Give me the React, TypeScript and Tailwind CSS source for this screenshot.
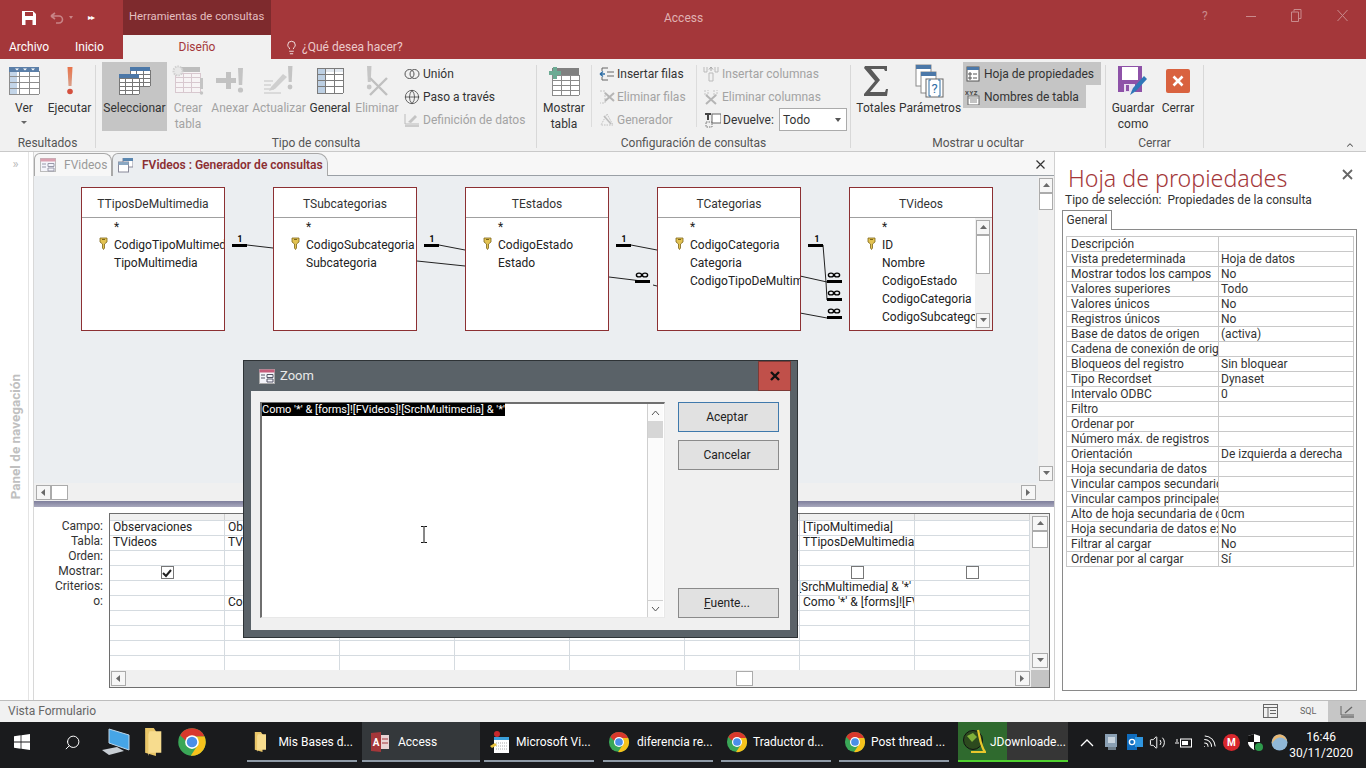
import { ReactNode } from "react"
import { Globe, Search, Volume2, Wifi, ChevronUp, Lightbulb } from "lucide-react"

const RED = "#a4373a"

function GridLines(p: { x: number; y: number; w: number; h: number; cols: number; rows: number; stroke?: string }) {
  const { x, y, w, h, cols, rows, stroke = "#8d8d8d" } = p
  const out = []
  for (let i = 0; i <= cols; i++) out.push(<line key={"c" + i} x1={x + (w * i) / cols} y1={y} x2={x + (w * i) / cols} y2={y + h} stroke={stroke} />)
  for (let i = 0; i <= rows; i++) out.push(<line key={"r" + i} x1={x} y1={y + (h * i) / rows} x2={x + w} y2={y + (h * i) / rows} stroke={stroke} />)
  return <g shapeRendering="crispEdges">{out}</g>
}

function VerIcon() {
  return (
    <svg width="32" height="30" viewBox="0 0 32 30">
      <rect x="1" y="1" width="30" height="27" fill="#fff" />
      <rect x="1" y="5" width="8" height="23" fill="#c3d5e8" />
      <GridLines x={1} y={5} w={30} h={23} cols={3} rows={4} />
      <rect x="1" y="1" width="30" height="5" fill="#5b7fa8" />
      <path d="M7 2.5h4l-2 2zM15 2.5h4l-2 2zM23 2.5h4l-2 2z" fill="#fff" />
    </svg>
  )
}
function RunIcon() {
  return (
    <svg width="12" height="30" viewBox="0 0 12 30">
      <defs>
        <linearGradient id="ex" x1="0" y1="0" x2="0" y2="1">
          <stop offset="0" stopColor="#e8734a" />
          <stop offset="1" stopColor="#d9a08a" />
        </linearGradient>
      </defs>
      <path d="M3.5 1h5l-1 19h-3z" fill="url(#ex)" />
      <circle cx="6" cy="25.5" r="2.8" fill="#d4503e" />
    </svg>
  )
}
function SelectIcon() {
  return (
    <svg width="34" height="30" viewBox="0 0 34 30">
      <rect x="12" y="1" width="20" height="19" fill="#fff" />
      <GridLines x={12} y={4} w={20} h={16} cols={3} rows={4} stroke="#777" />
      <rect x="12" y="1" width="20" height="4" fill="#4c78a8" />
      <rect x="1" y="8" width="20" height="20" fill="#fff" />
      <GridLines x={1} y={12} w={20} h={16} cols={3} rows={4} stroke="#777" />
      <rect x="1" y="8" width="20" height="4" fill="#4c78a8" />
    </svg>
  )
}
function MakeTableIcon() {
  return (
    <svg width="32" height="32" viewBox="0 0 32 32">
      <rect x="3" y="2" width="25" height="25" fill="#f7f4f5" />
      <GridLines x={3} y={8} w={25} h={19} cols={3} rows={4} stroke="#d8c8cf" />
      <rect x="3" y="2" width="25" height="5" fill="#bdbdbd" />
      <circle cx="6" cy="6" r="4.5" fill="#e8e8e8" stroke="#d0d0d0" strokeDasharray="1.5 1" strokeWidth="2" />
      <rect x="28" y="13" width="3" height="11" fill="#c4c4c4" />
      <circle cx="29.5" cy="28" r="1.7" fill="#c4c4c4" />
    </svg>
  )
}
function AppendIcon() {
  return (
    <svg width="30" height="30" viewBox="0 0 30 30">
      <path d="M7 9h4V3h5v6h5v5h-5v6h-5v-6H1V9z" fill="#c2c2c2" transform="translate(0,3)" />
      <path d="M23 2h5l-.8 17h-3.400z" fill="#c4c4c4" />
      <circle cx="25.5" cy="24" r="2.6" fill="#c4c4c4" />
    </svg>
  )
}
function UpdateIcon() {
  return (
    <svg width="32" height="32" viewBox="0 0 32 32">
      <path d="M1 16h9M1 20h7M1 24h10M1 28h17" stroke="#d2d2d2" strokeWidth="1.5" />
      <path d="M8 22l12-13 4 3-12 12-6 2z" fill="#cfcfcf" />
      <path d="M25 1h4.500l-.8 16h-3z" fill="#c4c4c4" />
      <circle cx="27" cy="22" r="2.4" fill="#c4c4c4" />
    </svg>
  )
}
function GeneralIcon() {
  return (
    <svg width="28" height="28" viewBox="0 0 28 28">
      <rect x="1" y="1" width="26" height="25" fill="#fff" />
      <rect x="1" y="1" width="9" height="25" fill="#bdd0e4" />
      <rect x="10" y="1" width="17" height="4" fill="#e2e8ef" />
      <GridLines x={1} y={1} w={26} h={25} cols={3} rows={4} stroke="#7b7b7b" />
    </svg>
  )
}
function DeleteIcon() {
  return (
    <svg width="24" height="32" viewBox="0 0 24 32">
      <path d="M2 1h4.500l-.8 16H2.800z" fill="#c6c6c6" />
      <circle cx="4.2" cy="22" r="2.4" fill="#c6c6c6" />
      <path d="M5 13l17 17M22 13L5 30" stroke="#c0c0c0" strokeWidth="2.4" />
    </svg>
  )
}
function ShowTableIcon() {
  return (
    <svg width="32" height="30" viewBox="0 0 32 30">
      <rect x="4" y="3" width="27" height="26" fill="#fff" />
      <GridLines x={4} y={9} w={27} h={20} cols={3} rows={4} stroke="#8a8a8a" />
      <rect x="4" y="2" width="27" height="7" fill="#808080" />
      <path d="M5 1h4v4h4v4H9v4H5V9H1V5h4z" fill="#6cab94" />
    </svg>
  )
}
function SigmaIcon() {
  return (
    <svg width="26" height="32" viewBox="0 0 26 32">
      <path d="M2 1h22v5h-2l-1-2H8l9 11-10 12h15l1-3h2l-1 7H1v-2l11-13L1 3z" fill="#5a5a5a" />
    </svg>
  )
}
function ParamsIcon() {
  return (
    <svg width="30" height="34" viewBox="0 0 30 34">
      <rect x="1" y="1" width="15" height="21" fill="#fff" stroke="#8a8a8a" />
      <rect x="1" y="1" width="15" height="4" fill="#4c78a8" />
      <rect x="6" y="8" width="15" height="21" fill="#fff" stroke="#8a8a8a" />
      <rect x="6" y="8" width="15" height="4" fill="#4c78a8" />
      <rect x="11" y="15" width="17" height="18" fill="#fff" stroke="#666" />
      <path d="M16 16h-2v16h2M23 16h2v16h-2" fill="none" stroke="#2f6ea5" />
      <text x="19.5" y="29" fontSize="13" textAnchor="middle" fill="#2f6ea5">?</text>
    </svg>
  )
}
function SaveAsIcon() {
  return (
    <svg width="32" height="32" viewBox="0 0 32 32">
      <path d="M1 1h24v26H1z" fill="#8e52a8" />
      <rect x="5" y="2" width="16" height="13" fill="#fff" />
      <rect x="7" y="19" width="11" height="8" fill="#e9def0" />
      <rect x="9" y="20" width="3" height="6" fill="#8e52a8" />
      <path d="M13 30l3-7 11-12 3 3-11 12z" fill="#2f77b8" />
    </svg>
  )
}
function CloseRedIcon() {
  return (
    <div className="w-[24px] h-[24px] rounded-[2px] bg-[#d9623f] flex items-center justify-center">
      <svg width="12" height="12" viewBox="0 0 12 12"><path d="M1.500 1.500l9 9M10.500 1.500l-9 9" stroke="#fff" strokeWidth="2.6" /></svg>
    </div>
  )
}
function SmallSvg(p: { children: ReactNode; w?: number }) {
  return <svg width={p.w ?? 16} height="16" viewBox="0 0 16 16" className="shrink-0">{p.children}</svg>
}

function ScrollBtn(p: { dir: "up" | "down" | "left" | "right"; className?: string }) {
  const d = { up: "M1 6l3.500-4 3.500 4z", down: "M1 2l3.500 4 3.500-4z", left: "M6 1L2 4.500 6 8z", right: "M2 1l4 3.500L2 8z" }[p.dir]
  return (
    <div className={"shrink-0 flex items-center justify-center bg-[#f6f6f6] border border-[#ababab] " + (p.className ?? "")}>
      <svg width="9" height="9" viewBox="0 0 9 9"><path d={d} fill="#6a6a6a" /></svg>
    </div>
  )
}

function Big(p: { w: string; icon: ReactNode; lines: string[]; off?: boolean; on?: boolean; caret?: boolean }) {
  return (
    <div className={"flex flex-col items-center h-[69px] shrink-0 " + p.w + (p.on ? " bg-[#c5c5c5]" : "")}>
      <div className="h-[38px] flex items-center justify-center shrink-0">{p.icon}</div>
      {p.lines.map((l) => (
        <div key={l} className={"leading-[16px] whitespace-nowrap " + (p.off ? "text-[#a3a3a3]" : "text-[#333]")}>{l}</div>
      ))}
      {p.caret && <div className="mt-[5px] w-0 h-0 border-x-[3px] border-x-transparent border-t-[3px] border-t-[#666]" />}
    </div>
  )
}
function Small(p: { icon: ReactNode; label: string; off?: boolean; gap?: string; on?: string }) {
  return (
    <div className={"h-[23px] flex items-center whitespace-nowrap " + (p.gap ?? "gap-[3px]") + " " + (p.off ? "text-[#a3a3a3]" : "text-[#333]") + " " + (p.on ?? "")}>
      {p.icon}
      {p.label}
    </div>
  )
}
function Group(p: { w: string; label: string; children: ReactNode }) {
  return (
    <div className={"flex shrink-0 " + p.w}>
      <div className="flex flex-col flex-1 min-w-0">
        <div className="h-[73px] flex">{p.children}</div>
        <div className="h-[16px] leading-[16px] text-center text-[#555]">{p.label}</div>
      </div>
      <div className="w-px my-[3px] bg-[#d8d8d8]" />
    </div>
  )
}
function Sep() {
  return <div className="w-px h-[62px] mt-[3px] bg-[#dcdcdc] shrink-0" />
}

function Ribbon() {
  return (
    <div className="h-[93px] bg-[#f1f1f1] border-b border-[#c9c9c9] pt-[3px] flex text-[12px] shrink-0 relative">
      <Group w="w-[96px]" label="Resultados">
        <Big w="w-[48px]" icon={<VerIcon />} lines={["Ver"]} caret />
        <Big w="w-[43px]" icon={<RunIcon />} lines={["Ejecutar"]} />
      </Group>
      <Group w="w-[441px]" label="Tipo de consulta">
        <div className="w-[6px]" />
        <Big w="w-[65px]" icon={<SelectIcon />} lines={["Seleccionar"]} on />
        <Big w="w-[42px]" icon={<MakeTableIcon />} lines={["Crear", "tabla"]} off />
        <Big w="w-[42px]" icon={<AppendIcon />} lines={["Anexar"]} off />
        <Big w="w-[56px]" icon={<UpdateIcon />} lines={["Actualizar"]} off />
        <Big w="w-[46px]" icon={<GeneralIcon />} lines={["General"]} />
        <Big w="w-[48px]" icon={<DeleteIcon />} lines={["Eliminar"]} off />
        <div className="ml-[3px] flex flex-col">
          <Small label="Unión" icon={<SmallSvg><circle cx="5.500" cy="8" r="4.500" fill="none" stroke="#555" /><circle cx="10.500" cy="8" r="4.500" fill="none" stroke="#555" /></SmallSvg>} />
          <Small label="Paso a través" icon={<Globe size={16} strokeWidth={1.2} color="#444" className="shrink-0" />} />
          <Small label="Definición de datos" off icon={<SmallSvg><path d="M1 2v10h14" fill="none" stroke="#bbb" /><path d="M4 10l7-7 2 2-6 6z" fill="#c4c4c4" /><path d="M1 13h14v2H1z" fill="#ccc" /></SmallSvg>} />
        </div>
      </Group>
      <Group w="w-[314px]" label="Configuración de consultas">
        <Big w="w-[54px]" icon={<ShowTableIcon />} lines={["Mostrar", "tabla"]} />
        <Sep />
        <div className="ml-[7px] w-[97px] flex flex-col">
          <Small label="Insertar filas" gap="gap-[2px]" icon={<SmallSvg><path d="M3 2h6M3 14h6M3 2v3M3 11v3" stroke="#666" fill="none" /><path d="M1 8h5M1 8l3-2.500M1 8l3 2.500" stroke="#2f6ea5" strokeWidth="1.3" fill="none" /><path d="M8 6h7M8 10h7" stroke="#666" /></SmallSvg>} />
          <Small label="Eliminar filas" off gap="gap-[2px]" icon={<SmallSvg><path d="M1 2h5v12H1" stroke="#c4c4c4" fill="none" strokeDasharray="2 1" /><path d="M6 4l9 8M15 4l-9 8" stroke="#b5b5b5" strokeWidth="2" /></SmallSvg>} />
          <Small label="Generador" off gap="gap-[2px]" icon={<SmallSvg><path d="M8 2l6 11H2z" fill="none" stroke="#c0c0c0" strokeDasharray="1.500 1" /><path d="M5 4l7 8" stroke="#bdbdbd" strokeWidth="1.6" /></SmallSvg>} />
        </div>
        <Sep />
        <div className="ml-[6px] flex flex-col">
          <Small label="Insertar columnas" off icon={<SmallSvg><path d="M1 1v5h3V1M12 1v5h3V1" stroke="#bbb" fill="none" /><path d="M8 1v4M8 1L6 3.500M8 1l2 2.500" stroke="#aaa" fill="none" /><path d="M6 7h4v8H6z" fill="none" stroke="#bbb" /></SmallSvg>} />
          <Small label="Eliminar columnas" off icon={<SmallSvg><path d="M2 1v5h3V1M11 1v5h3V1" stroke="#c4c4c4" fill="none" strokeDasharray="2 1" /><path d="M3 6l10 9M13 6L3 15" stroke="#b5b5b5" strokeWidth="2" /></SmallSvg>} />
          <div className="h-[23px] flex items-center">
            <SmallSvg w={18}><path d="M1 1h6v2H5v5H3V3H1z" fill="#444" /><rect x="8" y="2" width="9" height="9" fill="#fff" stroke="#666" /><path d="M2 10h6v5H2z" fill="none" stroke="#777" strokeDasharray="1.500 1" /></SmallSvg>
            <span className="ml-[2px] text-[#333] w-[56px] whitespace-nowrap">Devuelve:</span>
            <div className="w-[68px] h-[23px] bg-white border border-[#ababab] flex items-center justify-between px-[3px] text-[#333]">
              Todo
              <div className="w-0 h-0 mr-[2px] border-x-[3px] border-x-transparent border-t-[4px] border-t-[#555]" />
            </div>
          </div>
        </div>
      </Group>
      <Group w="w-[255px]" label="Mostrar u ocultar">
        <Big w="w-[50px]" icon={<SigmaIcon />} lines={["Totales"]} />
        <Big w="w-[58px]" icon={<ParamsIcon />} lines={["Parámetros"]} />
        <div className="ml-[4px] flex flex-col items-start">
          <Small on="bg-[#c5c5c5] w-[138px] pl-[2px]" label="Hoja de propiedades" icon={<SmallSvg><rect x="2" y="1" width="12" height="14" fill="#fff" stroke="#555" /><rect x="2" y="1" width="12" height="3" fill="#4c78a8" /><path d="M4 7h2v2H4zM4 11h2v2H4zM8 8h4M8 12h4" stroke="#555" fill="none" /></SmallSvg>} />
          <Small on="bg-[#c5c5c5] w-[123px] pl-[2px]" label="Nombres de tabla" icon={<SmallSvg><rect x="3" y="7" width="11" height="9" fill="#fff" stroke="#666" /><path d="M3 9h11M5 11h7M5 13h7" stroke="#888" /><text x="0" y="5.500" fontSize="6" fontWeight="700" fill="#444" letterSpacing="0.6">XYZ</text></SmallSvg>} />
        </div>
      </Group>
      <Group w="w-[98px]" label="Cerrar">
        <Big w="w-[54px]" icon={<SaveAsIcon />} lines={["Guardar", "como"]} />
        <Big w="w-[36px]" icon={<CloseRedIcon />} lines={["Cerrar"]} />
      </Group>
      <div className="ml-auto mt-[78px] mr-[11px] h-[8px]">
        <ChevronUp size={10} strokeWidth={2.5} color="#555" />
      </div>
    </div>
  )
}

function TableNode(p: { left: string; title: string; fields: string[]; keyIdx: number; scroll?: boolean }) {
  return (
    <div className={"absolute top-[11px] w-[144px] h-[144px] bg-white border border-[#8c3033] flex flex-col " + p.left}>
      <div className="h-[30px] shrink-0 border-b border-[#a0a0a0] flex items-center justify-center text-[#333] pt-[3px]">{p.title}</div>
      <div className="flex flex-1 min-h-0">
        <div className="flex-1 min-w-0 overflow-hidden">
          {["*", ...p.fields].map((f, i) => (
            <div key={f} className="h-[18px] leading-[18px] flex items-center whitespace-nowrap text-[#222] pl-[17px]">
              <span className="w-[15px] shrink-0 flex items-center">{i === p.keyIdx && <KeyIcon />}</span>
              {f}
            </div>
          ))}
        </div>
        {p.scroll && (
          <div className="w-[17px] shrink-0 bg-[#f0f0f0] flex flex-col py-[2px] pl-[1px] pr-[2px]">
            <ScrollBtn dir="up" className="h-[15px]" />
            <div className="h-[39px] bg-white border border-[#ababab]" />
            <div className="flex-1" />
            <ScrollBtn dir="down" className="h-[15px]" />
          </div>
        )}
      </div>
    </div>
  )
}
function KeyIcon() {
  return (
    <svg width="9" height="13" viewBox="0 0 9 13" className="-mt-[3px]">
      <path d="M1 1h7v4L5.500 7v4L4.500 12.500 3.500 11V7L1 5z" fill="#e3c352" stroke="#7d6519" strokeWidth="0.8" />
      <path d="M3 2.500h3" stroke="#7d6519" />
    </svg>
  )
}
function Inf(p: { x: number; y: number }) {
  return (
    <g fill="none" stroke="#000" strokeWidth="1.4">
      <ellipse cx={p.x - 3} cy={p.y} rx="2.600" ry="1.900" />
      <ellipse cx={p.x + 3} cy={p.y} rx="2.600" ry="1.900" />
    </g>
  )
}
function One(p: { x: number }) {
  return <text x={p.x} y="242" fontSize="8.5" fontWeight="700" textAnchor="middle" fill="#000">1</text>
}
function Links() {
  return (
    <svg className="absolute inset-0 pointer-events-none" width="1004" height="306" viewBox="34 176 1004 306">
      <g stroke="#222" fill="none">
        <path d="M247 245l26 3M439 245l26 5M417 261l48 5M631 245l26 5M609 277l41 5M653 285l4 1M823 245l3 37 1 18M800 276l27 6M800 313l27 5" />
      </g>
      <g fill="#000">
        <rect x="232" y="244" width="15" height="3" /><rect x="424" y="244" width="15" height="3" /><rect x="616" y="244" width="15" height="3" /><rect x="808" y="244" width="15" height="3" />
        <rect x="635" y="280" width="15" height="3" /><rect x="827" y="280" width="15" height="3" /><rect x="827" y="298" width="15" height="3" /><rect x="827" y="316" width="15" height="3" />
      </g>
      <One x={240} /><One x={432} /><One x={624} /><One x={817} />
      <Inf x={642} y={275} /><Inf x={834} y={275} /><Inf x={834} y={293} /><Inf x={834} y={311} />
    </svg>
  )
}

const clipped = "[forms]![FVideos]![SrchMultimedia] & '*'"
const gridRows: (string | null)[][] = [
  ["Observaciones", "Observaciones", "", "", "", "", "[TipoMultimedia]", ""],
  ["TVideos", "TVideos", "", "", "", "", "TTiposDeMultimedia", ""],
  ["", "", "", "", "", "", "", ""],
  [null, null, null, null, null, null, null, null],
  ["", "", "", "", "", "", clipped, ""],
  ["", "Como '*' & [forms]![FVideos]", "", "", "", "", "Como '*' & [forms]![FVideos]", ""],
  ["", "", "", "", "", "", "", ""],
  ["", "", "", "", "", "", "", ""],
  ["", "", "", "", "", "", "", ""],
  ["", "", "", "", "", "", "", ""],
]

function QueryGrid() {
  const labels = ["Campo:", "Tabla:", "Orden:", "Mostrar:", "Criterios:", "o:"]
  return (
    <div className="flex-1 bg-white flex pt-[6px] min-h-0">
      <div className="w-[70px] pt-[6px] text-right text-[#333] shrink-0 pr-px">
        {labels.map((l) => <div key={l} className="h-[15px] leading-[15px]">{l}</div>)}
      </div>
      <div className="ml-[5px] w-[941px] h-[175px] border border-[#6e6e6e] flex flex-col">
        <div className="flex flex-1 min-h-0">
          <div className="w-[920px] flex flex-col">
            <div className="h-[6px] grid grid-cols-8 shrink-0">
              {gridRows[0].map((_, i) => <div key={i} className="bg-[#f0f0f0] border-r border-[#d0d0d0]" />)}
            </div>
            <div className="grid grid-cols-8 auto-rows-[15px]">
              {gridRows.flatMap((row, r) =>
                row.map((c, i) => (
                  <div key={r + "-" + i} className={"border-t border-r border-[#d5dbe0] overflow-hidden whitespace-nowrap flex items-center px-[3px] text-[#222] " + (c === null ? "justify-center pb-px" : "pb-[3px]") + (c === clipped ? " justify-end" : "")}>
                    {c === null ? (
                      <div className="w-[13px] h-[13px] border border-[#777] bg-white flex items-center justify-center">
                        {r === 3 && i === 0 && <svg width="10" height="10" viewBox="0 0 10 10"><path d="M1 5l3 3 5-6" fill="none" stroke="#222" strokeWidth="2" /></svg>}
                      </div>
                    ) : c}
                  </div>
                ))
              )}
            </div>
          </div>
          <div className="w-[19px] shrink-0 bg-[#f0f0f0] flex flex-col pt-[2px] pb-[2px] pl-[2px] pr-px">
            <ScrollBtn dir="up" className="h-[15px]" />
            <div className="h-[17px] bg-white border border-[#ababab]" />
            <div className="flex-1" />
            <ScrollBtn dir="down" className="h-[15px]" />
          </div>
        </div>
        <div className="h-[17px] shrink-0 flex bg-[#f0f0f0]">
          <div className="flex-1 flex items-center px-px">
            <ScrollBtn dir="left" className="w-[15px] h-[15px]" />
            <div className="ml-[610px] w-[17px] h-[15px] bg-white border border-[#ababab]" />
            <div className="flex-1" />
            <ScrollBtn dir="right" className="w-[15px] h-[15px]" />
          </div>
          <div className="w-[18px] bg-[#c4c4c4]" />
        </div>
      </div>
    </div>
  )
}

const props: [string, string][] = [
  ["Descripción", ""], ["Vista predeterminada", "Hoja de datos"], ["Mostrar todos los campos", "No"], ["Valores superiores", "Todo"],
  ["Valores únicos", "No"], ["Registros únicos", "No"], ["Base de datos de origen", "(activa)"], ["Cadena de conexión de origen", ""],
  ["Bloqueos del registro", "Sin bloquear"], ["Tipo Recordset", "Dynaset"], ["Intervalo ODBC", "0"], ["Filtro", ""], ["Ordenar por", ""],
  ["Número máx. de registros", ""], ["Orientación", "De izquierda a derecha"], ["Hoja secundaria de datos", ""], ["Vincular campos secundarios", ""],
  ["Vincular campos principales", ""], ["Alto de hoja secundaria de datos", "0cm"], ["Hoja secundaria de datos expandida", "No"], ["Filtrar al cargar", "No"], ["Ordenar por al cargar", "Sí"],
]

function PropertySheet() {
  return (
    <div className="w-[311px] shrink-0 bg-white flex flex-col text-[#333] pl-[7px] pr-[9px] pb-[9px]">
      <div className="h-[38px] flex items-end justify-between shrink-0">
        <span className="text-[23.2px] leading-[30px] -mb-[3px] ml-[6px] text-[#a4373a] font-light [font-family:'Noto_Sans',sans-serif]">Hoja de propiedades</span>
        <svg width="11" height="11" viewBox="0 0 11 11" className="mb-[10px] mr-[4px]"><path d="M1 1l9 9M10 1l-9 9" stroke="#666" strokeWidth="1.8" /></svg>
      </div>
      <div className="h-[20px] leading-[20px] ml-[3px] shrink-0 whitespace-pre">Tipo de selección:  Propiedades de la consulta</div>
      <div className="h-[20px] w-[50px] border border-b-0 border-[#8a8a8a] bg-white relative z-10 -mb-px leading-[18px] text-center shrink-0">General</div>
      <div className="flex-1 border border-[#8a8a8a] px-[3px] pt-[6px]">
        <div className="border-t border-l border-[#c8c8c8] w-[288px]">
          {props.map(([k, v]) => (
            <div key={k} className="h-[15px] flex border-b border-r border-[#c8c8c8] leading-[15px]">
              <div className="w-[152px] shrink-0 overflow-hidden whitespace-nowrap pl-[4px] border-r border-[#c8c8c8]">{k}</div>
              <div className="pl-[2px] whitespace-nowrap">{v}</div>
            </div>
          ))}
        </div>
      </div>
    </div>
  )
}

function ZoomDialog() {
  return (
    <div className="absolute left-[243px] top-[360px] w-[555px] h-[278px] bg-[#5a6268] border border-[#2e3336] px-[7px] pb-[7px] flex flex-col text-[12px] text-[#222] z-20">
      <div className="h-[30px] flex items-center shrink-0 -mr-[7px] pr-[6px]">
        <svg width="16" height="15" viewBox="0 0 16 15" className="ml-[8px]">
          <rect x="0.5" y="0.5" width="15" height="14" fill="#f4f4fa" stroke="#aaa" />
          <rect x="0.5" y="0.5" width="15" height="3" fill="#c65a7a" />
          <path d="M2 6h4M2 9h4M8 5.500h6v3H8zM8 10h6v3H8z" stroke="#556" fill="none" />
        </svg>
        <span className="ml-[5px] text-[#e8e8e8] text-[13px]">Zoom</span>
        <div className="ml-auto w-[33px] h-[30px] bg-[#c0504a] border border-[#7d3a36] flex items-center justify-center">
          <svg width="10" height="10" viewBox="0 0 10 10"><path d="M1 1l8 8M9 1L1 9" stroke="#111" strokeWidth="2.4" /></svg>
        </div>
      </div>
      <div className="flex-1 bg-[#f0f0f0] flex pt-[11px] pl-[9px] pr-[11px] pb-[12px] min-h-0">
        <div className="w-[405px] flex bg-white border-t-2 border-l-2 border-[#6f6f6f] border-r border-b border-r-[#e8e8e8] border-b-[#e8e8e8] pr-px">
          <div className="flex-1 text-[11px] leading-[12px]">
            <span className="bg-black text-white whitespace-pre">Como '*' & [forms]![FVideos]![SrchMultimedia] & '*'</span>
          </div>
          <div className="w-[16px] border-l border-[#cfcfcf] bg-[#fbfbfb] flex flex-col">
            <div className="h-[17px] flex items-center justify-center">
              <svg width="9" height="6" viewBox="0 0 9 6"><path d="M1 5l3.500-4L8 5" fill="none" stroke="#555" /></svg>
            </div>
            <div className="h-[17px] bg-[#d6d6d6]" />
            <div className="flex-1" />
            <div className="h-[17px] flex items-center justify-center border-t border-[#cfcfcf]">
              <svg width="9" height="6" viewBox="0 0 9 6"><path d="M1 1l3.500 4L8 1" fill="none" stroke="#555" /></svg>
            </div>
          </div>
        </div>
        <div className="ml-[13px] flex-1 flex flex-col">
          <div className="h-[30px] bg-[#e1e1e1] border border-[#3f79ac] flex items-center justify-center pr-[3px]">Aceptar</div>
          <div className="mt-[8px] h-[30px] bg-[#e1e1e1] border border-[#8a8a8a] flex items-center justify-center pr-[3px]">Cancelar</div>
          <div className="mt-auto h-[30px] bg-[#e1e1e1] border border-[#8a8a8a] flex items-center justify-center pr-[3px]"><span><span className="underline">F</span>uente...</span></div>
        </div>
      </div>
      <svg width="8" height="17" viewBox="0 0 8 17" className="absolute left-[176px] top-[165px]">
        <path d="M1 .5h2.500l.5.5.5-.5H7M4 1v15M1 16.500h2.500l.5-.5.5.5H7" stroke="#111" fill="none" />
      </svg>
    </div>
  )
}

function Chrome(p: { size: number }) {
  return (
    <svg width={p.size} height={p.size} viewBox="0 0 24 24" className="shrink-0">
      <circle cx="12" cy="12" r="11" fill="#3aa757" />
      <path d="M2.500 6.500A11 11 0 0 1 22 7.500H12a5 5 0 0 0-5 3.500z" fill="#d8382c" />
      <path d="M22 7.500A11 11 0 0 1 11 23l5.500-8.500A5 5 0 0 0 12 7.500z" fill="#f6c21c" />
      <circle cx="12" cy="12" r="5.500" fill="#fff" />
      <circle cx="12" cy="12" r="4.200" fill="#4a8fe8" />
    </svg>
  )
}
function FolderIcon(p: { h: number }) {
  return (
    <svg width={p.h * 0.62} height={p.h} viewBox="0 0 16 26" className="shrink-0">
      <path d="M1 0h8l2 3v23l-10-3z" fill="#e9c668" />
      <path d="M5 3h11v20H5l-1 3V6z" fill="#f7dc8e" />
    </svg>
  )
}
function TaskItem(p: { w: string; icon: ReactNode; label: string; active?: boolean; under?: string; pl: string; gap: string }) {
  return (
    <div className={"h-[40px] flex items-center whitespace-nowrap border-b-2 shrink-0 pt-[2px] " + p.w + " " + p.pl + " " + p.gap + " " + (p.under ?? "border-[#8e9aa6]") + (p.active ? " bg-[#34383b]" : "")}>
      {p.icon}
      <span>{p.label}</span>
    </div>
  )
}

function Taskbar() {
  return (
    <div className="h-[46px] bg-[#1a1b1d] flex items-start text-white text-[12px] shrink-0 relative">
      <div className="w-[44px] h-[40px] flex items-center justify-center">
        <svg width="16" height="16" viewBox="0 0 16 16"><path d="M0 2.200l6.600-.9v6.300H0zM7.400 1.200L16 0v7.600H7.400zM0 8.400h6.600v6.300L0 13.800zM7.400 8.400H16V16l-8.600-1.200z" fill="#fff" /></svg>
      </div>
      <div className="w-[56px] h-[40px] flex items-center justify-center">
        <Search size={17} strokeWidth={1.4} className="-scale-x-100" />
      </div>
      <div className="w-[36px] h-[40px] flex items-center justify-center">
        <svg width="32" height="28" viewBox="0 0 32 28"><path d="M7 1l20 6v15L7 15z" fill="#46a5e6" stroke="#bcd6ea" /><path d="M0 22l15-3 7 4-15 4z" fill="#c8ced4" /></svg>
      </div>
      <div className="w-[34px] h-[40px] flex items-center justify-center"><FolderIcon h={28} /></div>
      <div className="w-[44px] h-[40px] flex items-center justify-center"><Chrome size={30} /></div>
      <div className="w-[33px]" />
      <TaskItem w="w-[110px]" pl="pl-[7px]" gap="gap-[12px]" icon={<FolderIcon h={20} />} label="Mis Bases d..." />
      <div className="w-[5px]" />
      <TaskItem w="w-[118px]" pl="pl-[9px]" gap="gap-[9px]" active icon={
        <svg width="18" height="20" viewBox="0 0 18 20" className="shrink-0">
          <path d="M0 1l10-1v20L0 19z" fill="#a4373a" />
          <text x="5" y="14" fontSize="10" fontWeight="700" textAnchor="middle" fill="#fff">A</text>
          <path d="M10 3h8v14h-8z" fill="#e9d4d4" /><path d="M11 7h6M11 11h6" stroke="#a4373a" />
        </svg>} label="Access" />
      <div className="w-[4px]" />
      <TaskItem w="w-[110px]" pl="pl-[6px]" gap="gap-[6px]" icon={
        <svg width="20" height="22" viewBox="0 0 20 22" className="shrink-0">
          <rect x="4" y="6" width="15" height="16" fill="#fff" /><rect x="4" y="6" width="15" height="3" fill="#3aa0dd" />
          <path d="M6 12h11M6 15h11M6 18h11" stroke="#aaa" strokeDasharray="1 1" />
          <path d="M0 15l5-3 2 2-5 3z" fill="#e8c23c" /><circle cx="7" cy="3" r="3" fill="#c8282c" />
        </svg>} label="Microsoft Vi..." />
      <div className="w-[9px]" />
      <TaskItem w="w-[110px]" pl="pl-[5px]" gap="gap-[7px]" icon={<Chrome size={22} />} label="diferencia re..." />
      <div className="w-[8px]" />
      <TaskItem w="w-[110px]" pl="pl-[5px]" gap="gap-[5px]" icon={<Chrome size={22} />} label="Traductor d..." />
      <div className="w-[8px]" />
      <TaskItem w="w-[110px]" pl="pl-[5px]" gap="gap-[5px]" icon={<Chrome size={22} />} label="Post thread ..." />
      <div className="w-[9px]" />
      <div className="w-[110px] h-[40px] flex border-b-2 border-[#4fd12f] bg-[#363636] shrink-0 relative whitespace-nowrap">
        <div className="w-[49px] bg-[#2f6a2e] flex items-center pl-[4px]">
          <svg width="24" height="26" viewBox="0 0 24 26">
            <circle cx="11" cy="12" r="9.500" fill="#2c4a1e" stroke="#111" /><path d="M5 8l6-3 4 4-5 5z" fill="#7fb03a" />
            <path d="M16 2c2 7 2 15 7 22H9" fill="none" stroke="#e8c72c" strokeWidth="2.2" />
          </svg>
        </div>
        <span className="absolute left-[32px] top-[11px]">JDownloade...</span>
      </div>
      <div className="flex-1 h-[40px] flex items-center pl-[12px] relative">
        <svg width="14" height="9" viewBox="0 0 14 9"><path d="M1 8l6-6 6 6" fill="none" stroke="#fff" strokeWidth="1.3" /></svg>
        <svg width="14" height="18" viewBox="0 0 14 18" className="ml-[10px]"><rect x="1" y="1" width="12" height="13" fill="#8aa0b4" /><rect x="4" y="4" width="7" height="6" fill="#c8d4de" /><rect x="4" y="14" width="8" height="3" fill="#6f7f8c" /></svg>
        <svg width="16" height="18" viewBox="0 0 16 18" className="ml-[9px]"><rect x="0" y="1" width="10" height="16" fill="#0f6cbd" /><rect x="8" y="4" width="8" height="10" fill="#2f96e0" /><circle cx="5" cy="9" r="2.600" fill="none" stroke="#fff" strokeWidth="1.4" /></svg>
        <Volume2 size={17} strokeWidth={1.4} className="ml-[6px]" />
        <svg width="17" height="13" viewBox="0 0 17 13" className="ml-[9px]"><rect x="5.500" y="3" width="11" height="8" fill="none" stroke="#fff" /><rect x="7" y="5" width="6" height="4" fill="#fff" /><path d="M0 7h4M2 3v3" stroke="#fff" /></svg>
        <Wifi size={17} strokeWidth={1.4} className="ml-[8px] rotate-[45deg]" />
        <div className="ml-[6px] w-[17px] h-[17px] rounded-full bg-[#d9272e] flex items-center justify-center text-[10px] font-bold">M</div>
        <svg width="16" height="19" viewBox="0 0 16 19" className="ml-[7px]"><path d="M7 1l6 2v6c0 4-3 6-6 8-3-2-6-4-6-8V3z" fill="#fff" /><path d="M7 1v8H1V3zM7 9h6c0 4-3 6-6 8z" fill="#111" /><circle cx="12" cy="14" r="4" fill="#2e9a4c" /></svg>
        <svg width="17" height="17" viewBox="0 0 17 17" className="ml-[8px]"><circle cx="8.500" cy="8.500" r="8" fill="#8fb7d8" /><path d="M1 10c3-7 10-9 15-3-1-4-4-6.500-7.500-6.500C4 .5 1 4.500 1 10z" fill="#e9b873" /></svg>
        <div className="absolute right-[13px] top-[7px] text-center leading-[16px] text-[12px]">
          <div>16:46</div>
          <div>30/11/2020</div>
        </div>
      </div>
    </div>
  )
}

export default function App() {
  return (
    <div className="relative w-[1366px] h-[768px] overflow-hidden flex flex-col bg-white text-[12px] [font-family:'Roboto',sans-serif]">
      {/* title bar */}
      <div className="h-[35px] shrink-0 flex items-center relative" style={{ background: RED }}>
        <svg width="14" height="14" viewBox="0 0 14 14" className="ml-[22px]">
          <path d="M0 0h11l3 3v11H0z" fill="#fff" /><rect x="3" y="1" width="8" height="4" fill={RED} /><rect x="3.500" y="9" width="7" height="5" fill={RED} />
        </svg>
        <svg width="18" height="12" viewBox="0 0 18 12" className="ml-[14px]"><path d="M1 4l4-3M1 4l4 3M1 4h8a3.500 3.500 0 0 1 0 7H6" fill="none" stroke="#c88486" strokeWidth="1.6" /></svg>
        <div className="ml-[1px] w-0 h-0 border-x-[2.5px] border-x-transparent border-t-[3px] border-t-[#c88486]" />
        <div className="ml-[15px] text-white text-[8px] tracking-[-1px]">▸▸</div>
        <div className="absolute left-[123px] top-0 w-[148px] h-[35px] bg-[#7e2a2d] text-[#e4bfc0] text-[11.3px] flex items-center pl-[6px] whitespace-nowrap">Herramientas de consultas</div>
        <div className="absolute left-[664px] top-[10px] text-[#e0b2b3] leading-[16px]">Access</div>
        <div className="absolute left-[1202px] top-[8px] text-[#c98a8c] leading-[16px]">?</div>
        <div className="absolute left-[1246px] top-[16px] w-[10px] h-px bg-[#c98a8c]" />
        <svg width="11" height="13" viewBox="0 0 11 13" className="absolute left-[1291px] top-[9px]"><path d="M3 2.500V.5h7v9H8M.5 3h7v9.500h-7z" fill="none" stroke="#c98a8c" /></svg>
        <svg width="11" height="13" viewBox="0 0 11 13" className="absolute left-[1337px] top-[9px]"><path d="M.5 1l10 11M10.500 1L.5 12" stroke="#c98a8c" /></svg>
      </div>
      <div className="h-[24px] shrink-0 flex text-[12px] leading-[24px] relative" style={{ background: RED }}>
        <div className="w-[59px] pl-[9px] text-white">Archivo</div>
        <div className="w-[64px] pl-[16px] text-white">Inicio</div>
        <div className="w-[148px] bg-[#f1f1f1] text-[#a4373a] text-center">Diseño</div>
        <div className="ml-[13px] flex items-center text-[#ecc9ca] gap-[3px]">
          <Lightbulb size={15} strokeWidth={1.3} color="#fff" />
          ¿Qué desea hacer?
        </div>
      </div>
      <Ribbon />
      {/* main */}
      <div className="flex flex-1 min-h-0 border-b border-[#bdbdbd]">
        <div className="w-[34px] shrink-0 bg-white border-r border-[#d8d8d8] flex flex-col items-center pr-[2px] relative">
          <div className="h-[24px] flex items-center text-[#bbb] text-[13px]">»</div>
          <div className="mt-[198px] [writing-mode:vertical-rl] rotate-180 text-[#c0c0c0] font-bold text-[13.5px] whitespace-nowrap">Panel de navegación</div>
          <div className="absolute right-[4px] top-0 bottom-0 w-px bg-[#e4e4e4]" />
        </div>
        <div className="w-[1021px] shrink-0 flex flex-col border-r border-[#d0d0d0]">
          <div className="h-[24px] shrink-0 bg-[#f7f7f7] border-b border-[#9aa0a6] flex items-end relative">
            <div className="w-[78px] h-[23px] -mb-px rounded-tl-[6px] rounded-tr-[8px] border border-b-0 border-[#a8a8a8] bg-[#f7f7f7] flex items-center gap-[8px] pl-[5px] text-[#9a9a9a]">
              <svg width="16" height="14" viewBox="0 0 16 14"><rect x=".5" y=".5" width="15" height="13" fill="#f4f4fa" stroke="#bbb" /><rect x=".5" y=".5" width="15" height="3" fill="#dba0b0" /><path d="M2 6h4M2 9h4M8 5.500h6v3H8zM8 10h6v3H8z" stroke="#99a" fill="none" /></svg>
              FVideos
            </div>
            <div className="w-[216px] h-[23px] -mb-px rounded-tl-[6px] rounded-tr-[10px] border border-b-0 border-[#a8a8a8] bg-[#ebeef1] flex items-center gap-[9px] pl-[5px] font-semibold text-[#8c2f33] whitespace-nowrap">
              <svg width="15" height="15" viewBox="0 0 15 15"><rect x="5" y="0" width="10" height="9" fill="#fff" stroke="#889" /><rect x="5" y="0" width="10" height="3" fill="#5a87b0" /><rect x=".5" y="4" width="10" height="10" fill="#fff" stroke="#889" /><rect x=".5" y="4" width="10" height="3" fill="#8aa7c2" /></svg>
              FVideos : Generador de consultas
            </div>
            <svg width="9" height="9" viewBox="0 0 9 9" className="absolute right-[9px] top-[8px]"><path d="M.5.5l8 8M8.500.5l-8 8" stroke="#333" strokeWidth="1.2" /></svg>
          </div>
          <div className="h-[325px] shrink-0 flex flex-col">
            <div className="flex h-[307px]">
              <div className="relative w-[1004px] bg-[#ebeef1] overflow-hidden">
                <Links />
                <TableNode left="left-[47px]" title="TTiposDeMultimedia" fields={["CodigoTipoMultimedia", "TipoMultimedia"]} keyIdx={1} />
                <TableNode left="left-[239px]" title="TSubcategorias" fields={["CodigoSubcategoria", "Subcategoria"]} keyIdx={1} />
                <TableNode left="left-[431px]" title="TEstados" fields={["CodigoEstado", "Estado"]} keyIdx={1} />
                <TableNode left="left-[623px]" title="TCategorias" fields={["CodigoCategoria", "Categoria", "CodigoTipoDeMultimedia"]} keyIdx={1} />
                <TableNode left="left-[815px]" title="TVideos" fields={["ID", "Nombre", "CodigoEstado", "CodigoCategoria", "CodigoSubcategoria"]} keyIdx={1} scroll />
              </div>
              <div className="flex-1 bg-[#f0f0f0] flex flex-col py-[2px] px-[1px]">
                <ScrollBtn dir="up" className="h-[15px]" />
                <div className="h-[17px] bg-white border border-[#ababab]" />
                <div className="flex-1" />
                <ScrollBtn dir="down" className="h-[15px]" />
              </div>
            </div>
            <div className="flex-1 flex bg-[#f0f0f0] items-center pl-[2px] pr-[18px]">
              <ScrollBtn dir="left" className="w-[15px] h-[15px]" />
              <div className="w-[17px] h-[15px] bg-white border border-[#ababab]" />
              <div className="flex-1" />
              <ScrollBtn dir="right" className="w-[15px] h-[15px]" />
            </div>
          </div>
          <div className="h-[6px] shrink-0 bg-gradient-to-b from-[#7f7f9c] to-[#a9a9bd]" />
          <QueryGrid />
        </div>
        <PropertySheet />
      </div>
      <div className="h-[21px] shrink-0 bg-[#f1f1f1] flex items-center pl-[8px] pb-px text-[#666] relative">
        Vista Formulario
        <svg width="15" height="14" viewBox="0 0 15 14" className="absolute left-[1263px] top-[3px]"><rect x=".5" y=".5" width="14" height="13" fill="none" stroke="#666" /><path d="M.5 3.500h14M5 3.500v10M7 6.500h6M7 9.500h6" stroke="#666" /></svg>
        <span className="absolute left-[1300px] top-[4px] text-[9px] leading-[12px] text-[#666]">SQL</span>
        <div className="absolute left-[1328px] top-0 w-[38px] h-[21px] bg-[#c6c6c6] flex items-center justify-center">
          <svg width="15" height="14" viewBox="0 0 15 14"><path d="M1 1v9h13" fill="none" stroke="#666" /><path d="M5 8l7-6" stroke="#666" strokeWidth="1.3" /><path d="M1 11h13v2H1z" fill="#888" /></svg>
        </div>
      </div>
      <Taskbar />
      <ZoomDialog />
    </div>
  )
}
